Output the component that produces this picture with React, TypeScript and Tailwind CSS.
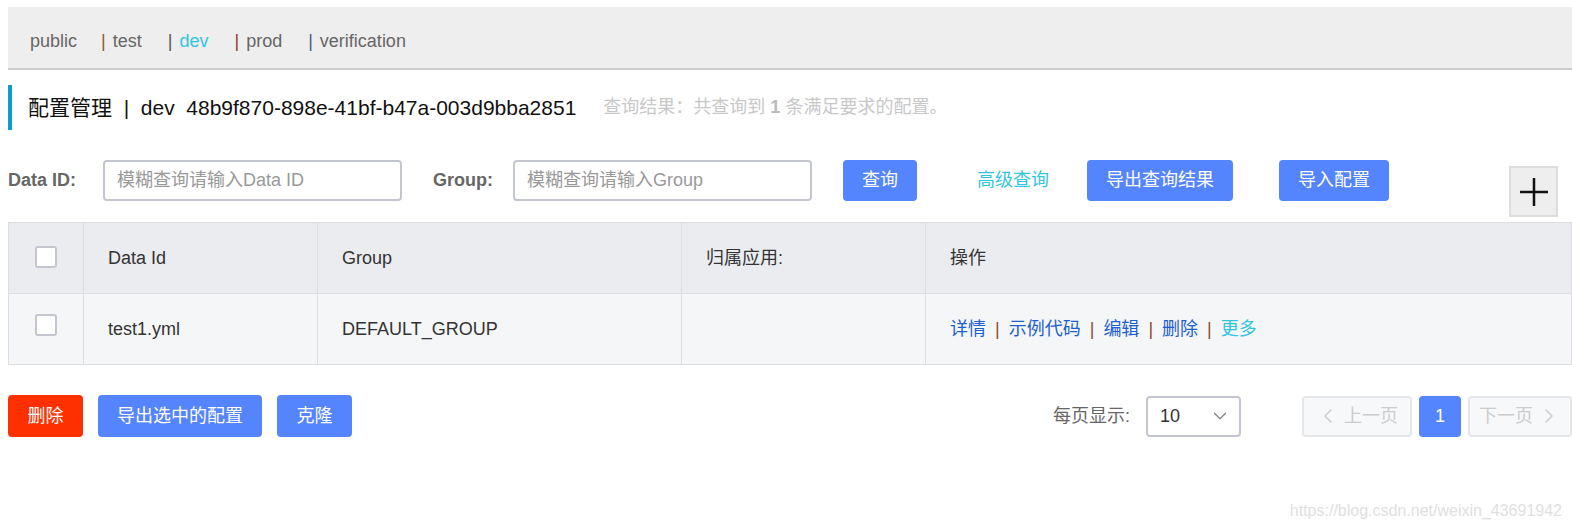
import { ChevronLeft, ChevronRight, ChevronDown } from 'lucide-react';

const FONT = '[font-family:"Liberation_Sans","Noto_Sans_CJK_SC",sans-serif]';

const tabs = [
  { name: 'public', active: false, pipe: '' },
  { name: 'test', active: false, pipe: 'text-[#8b5a2b]' },
  { name: 'dev', active: true, pipe: 'text-[#555]' },
  { name: 'prod', active: false, pipe: 'text-[#8b3a2b]' },
  { name: 'verification', active: false, pipe: 'text-[#4a5a8a]' },
];

function Checkbox() {
  return <div className="w-[22px] h-[22px] rounded-[3px] border-2 border-[#c4c6cf] bg-white" />;
}

function Pipe() {
  return <span className="mx-[9px] text-[#8b4a2b]">|</span>;
}

export default function App() {
  return (
    <div className={`w-[1572px] h-[530px] bg-white relative overflow-hidden ${FONT}`}>
      {/* 命名空间 */}
      <div className="mt-[7px] ml-2 h-[63px] bg-[#eeeeee] border-b-2 border-[#cccccc] flex items-center pl-[22px] pt-[7px] text-[18px] text-[#666]">
        {tabs.map((t, i) => (
          <span key={t.name} className="flex items-center">
            {i > 0 && <span className={`${i === 1 ? 'ml-[24px]' : 'ml-[26px]'} mr-[7px] ${t.pipe}`}>|</span>}
            <span className={t.active ? 'text-[#33c4e0]' : ''}>{t.name}</span>
          </span>
        ))}
      </div>

      {/* タイトル */}
      <div className="mt-[15px] ml-2 h-[45px] border-l-4 border-[#0b9dcf] flex items-center pl-4">
        <span className="text-[21px] text-[#111]">配置管理 &nbsp;|&nbsp; dev&nbsp; 48b9f870-898e-41bf-b47a-003d9bba2851</span>
        <span className="ml-[27px] text-[18px] text-[#c8c8c8]">
          查询结果：共查询到 <b className="text-[#bbb]">1</b> 条满足要求的配置。
        </span>
      </div>

      {/* 検索 */}
      <div className="mt-[30px] ml-2 mr-[14px] flex items-start text-[18px]">
        <div className="h-[41px] flex items-center">
          <span className="font-bold text-[#666] w-[95px]">Data ID:</span>
          <div className="w-[299px] h-[41px] border-2 border-[#c4c6cf] rounded-[4px] flex items-center px-3 text-[#999]">
            模糊查询请输入Data ID
          </div>
          <span className="ml-[31px] font-bold text-[#666] w-[80px]">Group:</span>
          <div className="w-[299px] h-[41px] border-2 border-[#c4c6cf] rounded-[4px] flex items-center px-3 text-[#999]">
            模糊查询请输入Group
          </div>
          <button className="ml-[31px] w-[74px] h-[41px] bg-[#5584ff] rounded-[4px] text-white">查询</button>
          <span className="ml-[60px] text-[#33c4e0]">高级查询</span>
          <button className="ml-[38px] w-[146px] h-[41px] bg-[#5584ff] rounded-[4px] text-white">导出查询结果</button>
          <button className="ml-[46px] w-[110px] h-[41px] bg-[#5584ff] rounded-[4px] text-white">导入配置</button>
        </div>
        <div className="ml-auto mt-[6px] w-[49px] h-[51px] bg-[#eeeeee] border-2 border-[#dddddd] flex items-center justify-center">
          <svg width="30" height="30" viewBox="0 0 30 30">
            <path d="M15 1v28M1 15h28" stroke="#111" strokeWidth="2.5" />
          </svg>
        </div>
      </div>

      {/* テーブル */}
      <div className="mt-[5px] ml-2 border border-[#dcdee3] text-[18px] text-[#333]">
        <div className="flex h-[71px] bg-[#ebecf0] border-b border-[#dcdee3]">
          <div className="w-[75px] flex items-start justify-center pt-[23px] border-r border-[#dcdee3]"><Checkbox /></div>
          <div className="w-[234px] flex items-center pl-6 border-r border-[#dcdee3]">Data Id</div>
          <div className="w-[364px] flex items-center pl-6 border-r border-[#dcdee3]">Group</div>
          <div className="w-[244px] flex items-center pl-6 border-r border-[#dcdee3]">归属应用:</div>
          <div className="flex-1 flex items-center pl-6">操作</div>
        </div>
        <div className="flex h-[70px] bg-[#f5f6f8]">
          <div className="w-[75px] flex items-start justify-center pt-[20px] border-r border-[#dcdee3]"><Checkbox /></div>
          <div className="w-[234px] flex items-center pl-6 border-r border-[#dcdee3]">test1.yml</div>
          <div className="w-[364px] flex items-center pl-6 border-r border-[#dcdee3]">DEFAULT_GROUP</div>
          <div className="w-[244px] border-r border-[#dcdee3]" />
          <div className="flex-1 flex items-center pl-6 text-[#1d5fce]">
            <span>详情</span><Pipe />
            <span>示例代码</span><Pipe />
            <span>编辑</span><Pipe />
            <span>删除</span><Pipe />
            <span className="text-[#33c4e0]">更多</span>
          </div>
        </div>
      </div>

      {/* フッター */}
      <div className="mt-[30px] ml-2 flex items-center text-[18px]">
        <button className="w-[75px] h-[42px] bg-[#ff3000] rounded-[4px] text-white">删除</button>
        <button className="ml-[15px] w-[164px] h-[42px] bg-[#5584ff] rounded-[4px] text-white">导出选中的配置</button>
        <button className="ml-[15px] w-[75px] h-[42px] bg-[#5584ff] rounded-[4px] text-white">克隆</button>
        <div className="ml-auto flex items-center">
          <span className="text-[#666]">每页显示:</span>
          <div className="ml-[16px] w-[95px] h-[41px] border-2 border-[#c4c6cf] rounded-[4px] flex items-center justify-between pl-3 pr-2 text-[#333]">
            <span>10</span>
            <ChevronDown size={22} strokeWidth={1.5} className="text-[#888]" />
          </div>
          <div className="ml-[61px] w-[110px] h-[41px] bg-[#f7f8fa] border-2 border-[#e6e7eb] rounded-[4px] flex items-center justify-center text-[#ccc]">
            <ChevronLeft size={24} strokeWidth={1.5} />
            <span className="ml-1">上一页</span>
          </div>
          <div className="ml-[7px] w-[42px] h-[41px] bg-[#5584ff] rounded-[4px] flex items-center justify-center text-white">1</div>
          <div className="ml-[7px] w-[104px] h-[41px] bg-[#f7f8fa] border-2 border-[#e6e7eb] rounded-[4px] flex items-center justify-center text-[#ccc]">
            <span className="mr-1">下一页</span>
            <ChevronRight size={24} strokeWidth={1.5} />
          </div>
        </div>
      </div>

      <div className="absolute right-[10px] bottom-[7px] text-[16px] text-[#e0e0e0] [font-family:'Liberation_Sans',sans-serif]">
        https://blog.csdn.net/weixin_43691942
      </div>
    </div>
  );
}
